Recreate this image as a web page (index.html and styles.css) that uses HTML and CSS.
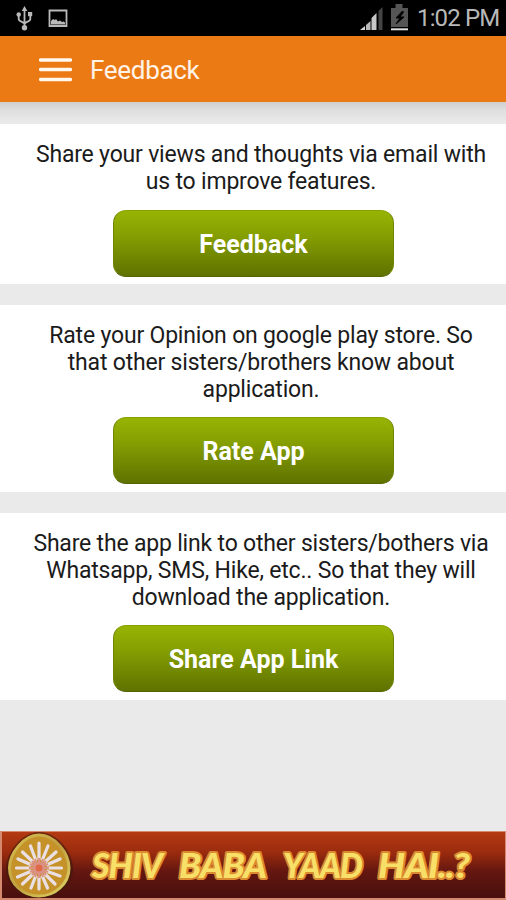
FILE: index.html
```html
<!DOCTYPE html>
<html lang="en">
<head>
<meta charset="utf-8">
<title>Feedback</title>
<link rel="stylesheet" href="styles.css">
</head>
<body>
<div class="status">
  <svg class="status-left" width="80" height="36" viewBox="0 0 80 36" fill="none" stroke="#b9b9b9" stroke-width="1.8">
    <path d="M24.5 10v17M18.700 14v5c0 3 5 2 5.800 5c.8-3 5.800-2 5.800-5v-5"/>
    <path d="M24.500 6l2.800 5h-5.600z" fill="#b9b9b9" stroke="none"/>
    <circle cx="24.500" cy="27.800" r="2.700" fill="#b9b9b9" stroke="none"/>
    <circle cx="18.700" cy="14.500" r="2.200" fill="#b9b9b9" stroke="none"/>
    <path d="M28 12h4.200v4.200H28z" fill="#b9b9b9" stroke="none"/>
    <path d="M49.500 10.500h17v15.500h-17z"/>
    <path d="M51 24.500v-3.500l2-2 2 1 1-1 2 2.500 2-1 2 1.500 1.500-.5 1.500 1v2z" fill="#b9b9b9" stroke="none"/>
  </svg>
  <svg class="status-icons" width="50" height="36" viewBox="360 0 50 36">
    <path d="M360 30l5-4v4z" fill="#d5d5d5"/>
    <path d="M366 25l4.500-4v9h-4.500z" fill="#b8b8b8"/>
    <path d="M371.500 18l5-5v17h-5z" fill="#c8c8c8"/>
    <path d="M378.500 11l4-4v23h-4z" fill="#444"/>
    <path d="M391 8h4.500v-4h7v4h5.500v19h-17z" fill="#555"/>
    <path d="M402.500 11l-6.500 7h4l-4 6 8-7h-4l3.500-5z" fill="#000" stroke="#000"/>
    <path d="M391 28.300h17v2h-17z" fill="#ddd"/>
  </svg>
  <span class="clock">1:02 PM</span>
</div>
<header class="appbar">
  <svg class="menu" width="33" height="26" viewBox="0 0 33 26" stroke="#fff8ee" stroke-width="3.400" stroke-linecap="round"><path d="M1.600 3h29.800M1.600 12.500h29.800M1.600 22.500h29.800"/></svg>
  <h1>Feedback</h1>
</header>
<main>
  <section class="card">
    <p>Share your views and thoughts via email with<br>us to improve features.</p>
    <button type="button">Feedback</button>
  </section>
  <section class="card">
    <p>Rate your Opinion on google play store. So<br>that other sisters/brothers know about<br>application.</p>
    <button type="button">Rate App</button>
  </section>
  <section class="card">
    <p>Share the app link to other sisters/bothers via<br>Whatsapp, SMS, Hike, etc.. So that they will<br>download the application.</p>
    <button type="button">Share App Link</button>
  </section>
</main>
<footer>
  <svg width="506" height="69" viewBox="0 831 506 69">
    <defs>
      <linearGradient id="bg" x1="0" y1="0" x2="0" y2="1"><stop offset="0" stop-color="#b33a12"/><stop offset=".3" stop-color="#9c2c0e"/><stop offset=".6" stop-color="#641610"/><stop offset="1" stop-color="#48100e"/></linearGradient>
      <linearGradient id="gold" x1="0" y1="0" x2="1" y2="1"><stop offset="0" stop-color="#d8c052"/><stop offset=".5" stop-color="#c0a040"/><stop offset="1" stop-color="#e0d568"/></linearGradient>
    </defs>
    <path d="M0 831h506v69H0z" fill="#d58a70"/>
    <path d="M2 832h503v66H2z" fill="url(#bg)"/>
    <path d="M39 832C57 832 73 852 73 869C73 886 57 898 39 898C21 898 6 886 6 869C6 852 22 832 39 832z" fill="#3f190b" opacity=".6"/>
    <path d="M39 835C55 835 69 853 69 868C69 884 55 896 39 896C23 896 9.500 884 9.500 868C9.500 853 24 835 39 835z" fill="#c5922a" stroke="url(#gold)" stroke-width="3"/>
    <g stroke="#eadfe3" stroke-width="3.200" stroke-linecap="round">
      <path d="M39 859V843M42.500 859.500L48 846M45.500 861.500L56 852M47.500 864.500L60 859M48 868H61.500M47.500 871.500L60 876M45.500 874.500L55 884M42.500 876.500L47.500 888M39 877V889M35.500 876.500L31 888M32.500 874.500L22.500 884M30.500 871.500L17.500 877M30 868H16.500M30.500 864.500L18 859M32.500 861.500L22.500 852M35.500 859.500L30.500 846"/>
    </g>
    <g stroke="#dc9187" stroke-width="2"><path d="M39 858V878M29 868H49M32 861L46 875M46 861L32 875M35 859L43 877M43 859L35 877M30 864L48 872M48 864L30 872"/></g>
    <circle cx="39" cy="868" r="3.500" fill="#e06a48"/>
    <g class="shout">
      <text x="92" y="877.500" textLength="70" lengthAdjust="spacingAndGlyphs">SHIV</text>
      <text x="179" y="877.500" textLength="87" lengthAdjust="spacingAndGlyphs">BABA</text>
      <text x="283" y="877.500" textLength="79" lengthAdjust="spacingAndGlyphs">YAAD</text>
      <text x="378" y="877.500" textLength="91" lengthAdjust="spacingAndGlyphs">HAI..?</text>
    </g>
  </svg>
</footer>
</body>
</html>
```

FILE: styles.css
```css
* { box-sizing: border-box; }
body {
  margin: 0;
  width: 506px;
  height: 900px;
  overflow: hidden;
  display: flex;
  flex-direction: column;
  background: #eaeaea;
  font-family: Roboto, "Liberation Sans", sans-serif;
}
.status {
  height: 36px;
  flex: none;
  display: flex;
  background: #000;
}
.status-icons { margin-left: auto; }
.clock {
  width: 96px;
  padding-left: 7px;
  color: #b8b8b8;
  font-size: 24px;
  letter-spacing: -0.85px;
  line-height: 37px;
  white-space: nowrap;
}
.appbar {
  height: 66px;
  flex: none;
  display: flex;
  align-items: center;
  gap: 18px;
  padding: 1px 0 0 39px;
  background: #ec7a14;
}
.appbar h1 {
  margin: 0;
  color: #fff3e8;
  font-size: 26px;
  font-weight: 400;
  letter-spacing: -0.3px;
  line-height: 32px;
}
main {
  flex: 1;
  display: flex;
  flex-direction: column;
  gap: 21px;
  padding-top: 22px;
  background: linear-gradient(#cecece, #dedede 8px, #eaeaea 20px);
}
.card {
  display: flex;
  flex-direction: column;
  align-items: center;
  padding: 17px 0 7px;
  background: #fff;
}
.card p {
  margin: 0 0 15px;
  padding-left: 16px;
  width: 506px;
  color: #1b1b1b;
  font-size: 23px;
  letter-spacing: -0.19px;
  line-height: 27px;
  text-align: center;
  white-space: nowrap;
}
.card + .card p { margin-bottom: 14px; }
.card + .card { padding-bottom: 8px; }
.card button {
  width: 281px;
  height: 67px;
  padding: 2px 0 0 1px;
  border: 1px solid #6d8600;
  border-top-color: #85a300;
  border-bottom-color: #526500;
  border-radius: 13px;
  background: linear-gradient(#97b404, #859f02 38%, #5f7200);
  color: #fff;
  font: 700 25px/30px Roboto, "Liberation Sans", sans-serif;
}
.card + .card button { padding-top: 3px; }
footer { height: 69px; flex: none; }
footer svg { display: block; }
.shout {
  font: italic 900 35px Lato, "Open Sans", sans-serif;
  letter-spacing: -1px;
  fill: #f8df68;
  stroke: #dc8a30;
  stroke-width: 4px;
  stroke-linejoin: round;
  paint-order: stroke;
}
```
